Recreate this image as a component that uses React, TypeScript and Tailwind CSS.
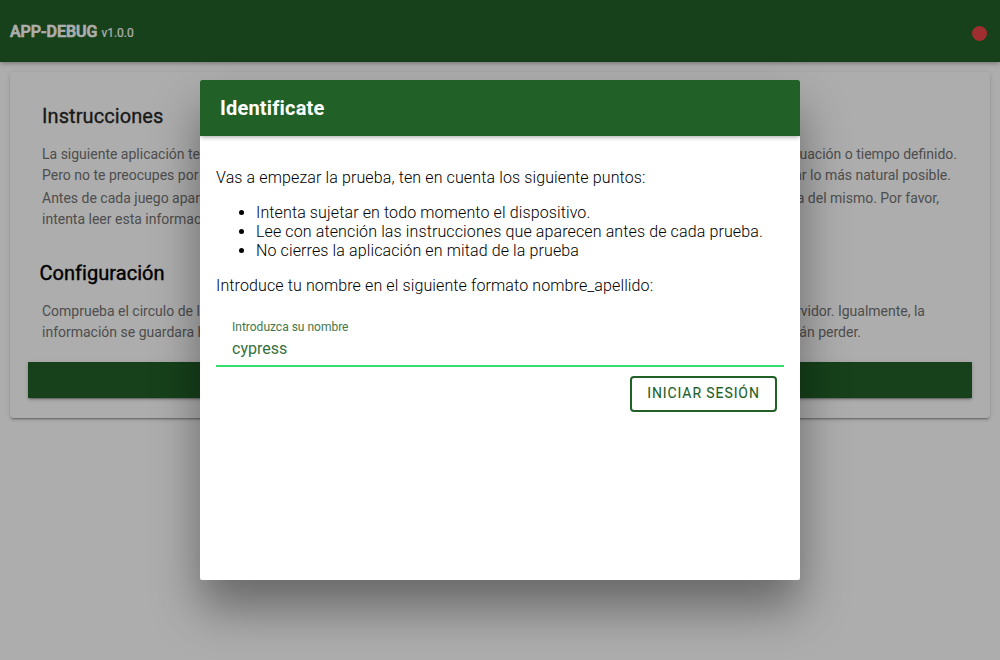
type Line = { start: string; end: string; width: string };

const instructions: Line[] = [
  { start: 'La siguiente aplicación te', end: 'situación o tiempo definido.', width: 'w-[915px]' },
  { start: 'Pero no te preocupes por', end: 'actuar lo más natural posible.', width: 'w-[909px]' },
];
const beforeGame: Line[] = [
  { start: 'Antes de cada juego aparece', end: 'encima del mismo. Por favor,', width: 'w-[897px]' },
  { start: 'intenta leer esta información', end: '', width: 'w-[897px]' },
];
const configuration: Line[] = [
  { start: 'Comprueba el circulo de la', end: 'servidor. Igualmente, la', width: 'w-[883px]' },
  { start: 'información se guardara hasta', end: 'podrán perder.', width: 'w-[819px]' },
];

function Lines({ items }: { items: Line[] }) {
  return (
    <div className="text-sm leading-[21px] whitespace-nowrap text-[#737373]">
      {items.map((l) => (
        <div key={l.start} className={'flex justify-between ' + l.width}>
          <span>{l.start}</span>
          <span>{l.end}</span>
        </div>
      ))}
    </div>
  );
}

function Page() {
  return (
    <div className="h-full bg-white">
      <header className="flex h-[62px] items-center justify-between bg-[#216127] pr-[13px] pl-[10px] shadow-[0_2px_4px_-1px_rgba(0,0,0,0.25),0_2px_5px_0_rgba(0,0,0,0.1)]">
        <div className="pt-[2px] text-base leading-6 whitespace-nowrap text-white">
          <span className="font-medium [-webkit-text-stroke:0.7px_white]">APP-DEBUG</span>{' '}
          <span className="text-xs [-webkit-text-stroke:0.2px_white]">v1.0.0</span>
        </div>
        <span className="mt-1 size-[15px] rounded-full bg-[#eb4448]" />
      </header>
      <main className="m-[10px] h-[346px] rounded bg-white px-[18px] pt-[32px] shadow-[0_3px_1px_-2px_rgba(0,0,0,0.2),0_2px_2px_0_rgba(0,0,0,0.14),0_1px_5px_0_rgba(0,0,0,0.12)]">
        <section className="pl-[14px]">
          <h1 className="text-xl leading-6 font-normal tracking-[0.08px] text-[#262626] [-webkit-text-stroke:0.3px_#262626]">Instrucciones</h1>
          <div className="mt-[16px]"><Lines items={instructions} /></div>
          <div className="mt-[2px]"><Lines items={beforeGame} /></div>
        </section>
        <section className="mt-[31px]">
          <h2 className="pl-[11.5px] text-xl leading-6 font-normal tracking-[0.04px] text-black [-webkit-text-stroke:0.4px_black]">Configuración</h2>
          <div className="mt-[16px] pl-[14px]"><Lines items={configuration} /></div>
        </section>
        <div className="mt-[19px] h-9 bg-[#216127] shadow-[0_3px_1px_-2px_rgba(0,0,0,0.2),0_2px_2px_0_rgba(0,0,0,0.14),0_1px_5px_0_rgba(0,0,0,0.12)]" />
      </main>
    </div>
  );
}

function LoginModal() {
  return (
    <div className="h-[500px] w-[600px] overflow-hidden rounded-[2px] bg-white text-base leading-[19px] text-[#222]">
      <header className="flex h-14 items-center bg-[#216127] px-5 shadow-[0_2px_4px_-1px_rgba(0,0,0,0.25),0_2px_5px_0_rgba(0,0,0,0.1)]">
        <h2 className="text-xl font-bold tracking-[0.18px] text-white">Identificate</h2>
      </header>
      <div className="px-4 pt-8">
        <div className="font-light tracking-[0.12px] text-black">
          <p>Vas a empezar la prueba, ten en cuenta los siguiente puntos:</p>
          <ul className="my-4 list-disc pl-10">
            <li>Intenta sujetar en todo momento el dispositivo.</li>
            <li>Lee con atención las instrucciones que aparecen antes de cada prueba.</li>
            <li>No cierres la aplicación en mitad de la prueba</li>
          </ul>
          <p>Introduce tu nombre en el siguiente formato nombre_apellido:</p>
        </div>
        <label className="mt-4 flex h-[56px] flex-col border-b-2 border-[#36de70] px-4 pt-[9px] text-[#216127]">
          <span className="text-xs leading-[15px] opacity-85">Introduzca su nombre</span>
          <input className="mt-[3px] h-5 w-full bg-transparent opacity-90 outline-none" defaultValue="cypress" />
        </label>
        <div className="mt-[9px] flex justify-end pr-[7px]">
          <button className="h-9 w-[147px] rounded border-2 border-[#216127] pb-[2px] text-sm leading-4 tracking-[0.91px] whitespace-nowrap text-[#216127] [-webkit-text-stroke:0.1px_#216127]">
            INICIAR SESIÓN
          </button>
        </div>
      </div>
    </div>
  );
}

export default function App() {
  return (
    <div className="relative h-[660px] w-[1000px] overflow-hidden font-['Roboto',sans-serif]">
      <Page />
      <div className="absolute inset-0 flex items-center justify-center bg-black/32">
        <div className="rounded-[2px] shadow-[0_28px_48px_rgba(0,0,0,0.4)]">
          <LoginModal />
        </div>
      </div>
    </div>
  );
}
